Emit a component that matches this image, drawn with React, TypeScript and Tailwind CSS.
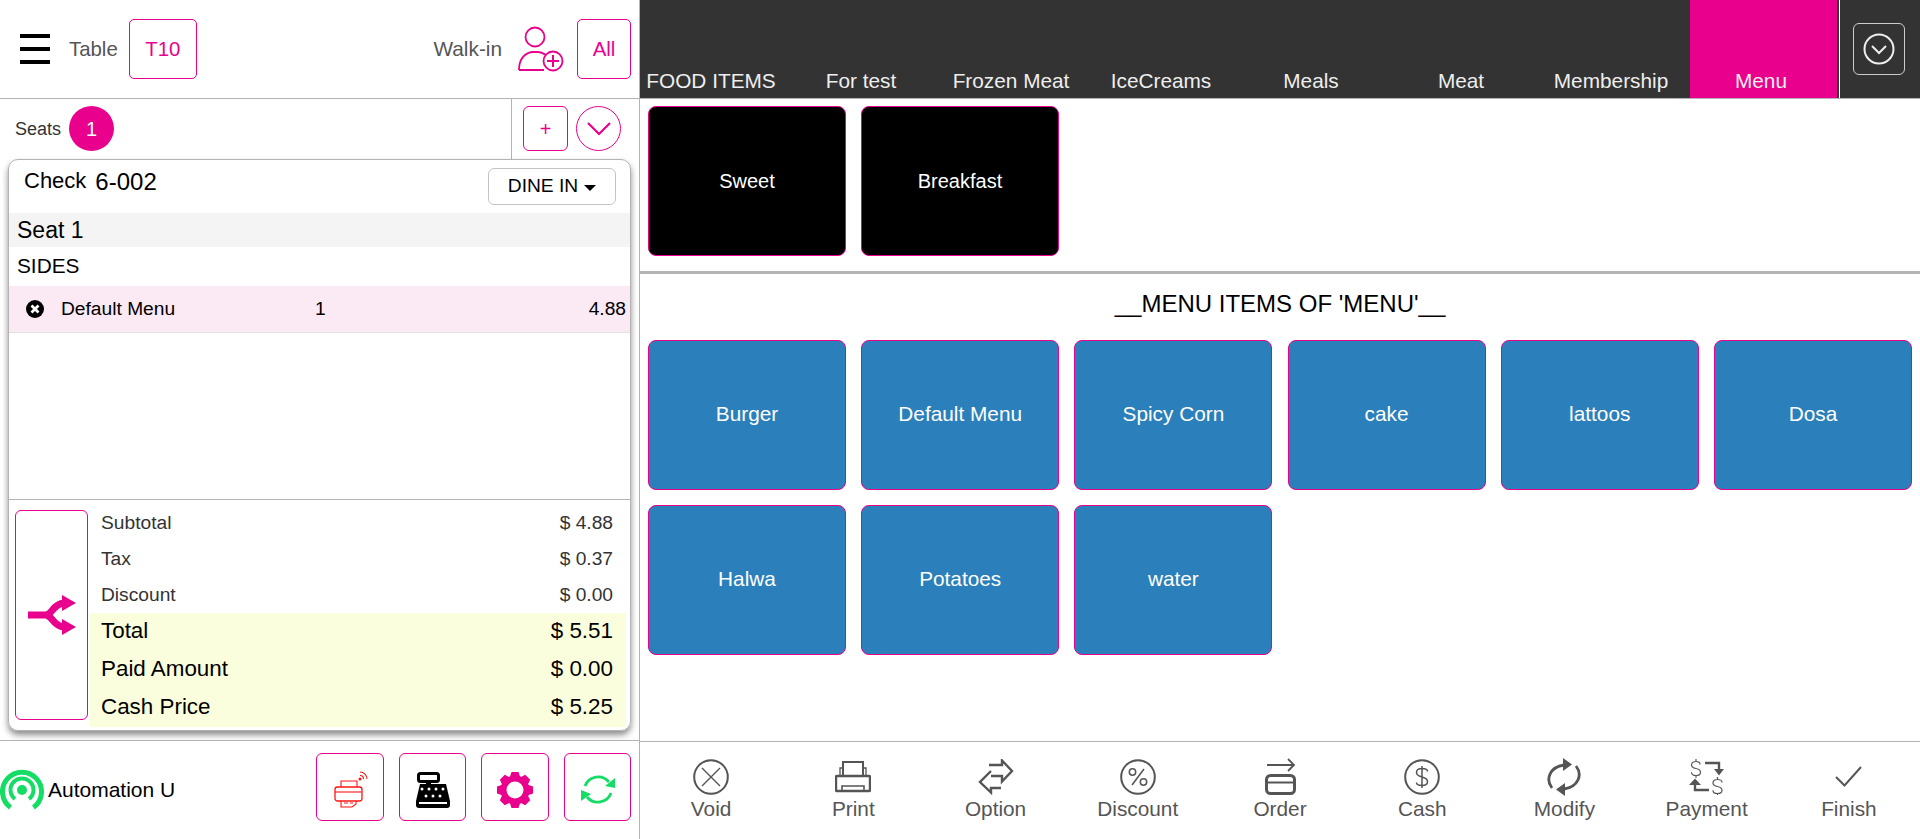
const tabs = ["FOOD ITEMS", "For test", "Frozen Meat", "IceCreams", "Meals", "Meat", "Membership", "Menu"];
const menuItems = ["Burger", "Default Menu", "Spicy Corn", "cake", "lattoos", "Dosa", "Halwa", "Potatoes", "water"];

const ACCENT = "#e9008c";

const VoidIcon = () => (
  <svg width="36" height="36" viewBox="0 0 36 36" fill="none" stroke="#555" strokeWidth="2">
    <circle cx="18" cy="18" r="16.8" />
    <path d="M9 9l18 18M27 9L9 27" strokeWidth="1.4" />
  </svg>
);

const PrintIcon = () => (
  <svg width="36" height="36" viewBox="0 0 36 36" fill="none" stroke="#555" strokeWidth="2">
    <path d="M8 17V3h20v14" />
    <path d="M8 9H5v8M28 9h3v8" strokeWidth="1.3" />
    <rect x="1" y="17" width="34" height="15" rx="1" strokeWidth="2.4" />
    <path d="M7 32v-5h22v5" strokeWidth="1.6" />
  </svg>
);

const OptionIcon = () => (
  <svg width="36" height="36" viewBox="0 0 36 36" fill="none" stroke="#555" strokeWidth="2.4">
    <path d="M11 6h13V1.500L34 12 24 22.500V17H13" />
    <path d="M23 29H13v4.500L2 23l11-11" />
  </svg>
);

const DiscountIcon = () => (
  <svg width="36" height="36" viewBox="0 0 36 36" fill="none" stroke="#555" strokeWidth="2">
    <circle cx="18" cy="18" r="16.8" />
    <path d="M24 10L12 26" strokeWidth="1.5" />
    <circle cx="12.5" cy="13" r="3.2" strokeWidth="1.5" />
    <circle cx="23.5" cy="23" r="3.2" strokeWidth="1.5" />
  </svg>
);

const OrderIcon = () => (
  <svg width="36" height="38" viewBox="0 0 36 38" fill="none" stroke="#555">
    <path d="M5 7h27M26 1l6 6-6 6" strokeWidth="1.800" />
    <rect x="4.500" y="17.500" width="28" height="18" rx="4" strokeWidth="3" />
    <path d="M4 24.500h29" strokeWidth="2" />
  </svg>
);

const CashIcon = () => (
  <svg width="36" height="36" viewBox="0 0 36 36" fill="none" stroke="#555" strokeWidth="2">
    <circle cx="18" cy="18" r="16.8" />
    <path d="M23.5 12.5c0-2-2.500-3-5.500-3s-5.500 1.200-5.500 4 2.500 3.700 5.500 4.500 5.500 1.700 5.500 4.500-2.500 4-5.500 4-5.500-1-5.500-3M18 7v22" strokeWidth="1.5" />
  </svg>
);

const ModifyIcon = () => (
  <svg width="36" height="40" viewBox="0 0 36 40" fill="none" stroke="#555" strokeWidth="2.8">
    <path d="M6 31C-1 22 4 10 18 8" />
    <path d="M30 9c7 9 2 21-12 23" />
    <path d="M17 1l9 6.500-9 6.500z" fill="#555" strokeWidth="0" />
    <path d="M19 26l-9 6.500 9 6.500z" fill="#555" strokeWidth="0" />
  </svg>
);

const PaymentIcon = () => (
  <svg width="38" height="36" viewBox="0 0 38 36" fill="none" stroke="#555">
    <path d="M12 5.500C12 3 10 2.500 8 2.500S3.500 3.500 3.500 6s2 3 4.500 3.500 4.500 1.300 4.500 3.700-2 3.300-4.500 3.300-4.500-1-4.500-3.300M8 0v2.500M8 16.500V19" strokeWidth="1.200" />
    <path d="M17 4h14v7" strokeWidth="2.400" />
    <path d="M26 10h10l-5 6.500z" fill="#555" strokeWidth="0" />
    <path d="M34 23.500c0-2.500-2-3-4.500-3s-4.500 1-4.500 3.500 2 3 4.500 3.500 4.500 1.300 4.500 3.700-2 3.300-4.500 3.300-4.500-1-4.500-3.300M29.500 18v2.500M29.500 34.500V37" strokeWidth="1.200" />
    <path d="M21 31H7v-6" strokeWidth="2.400" />
    <path d="M1 26h12l-6-6.500z" fill="#555" strokeWidth="0" />
  </svg>
);

const FinishIcon = () => (
  <svg width="28" height="24" viewBox="0 0 28 24" fill="none" stroke="#555" strokeWidth="2">
    <path d="M1 12l8.500 8.500L26 2" />
  </svg>
);

const actions = [
  { label: "Void", icon: <VoidIcon /> },
  { label: "Print", icon: <PrintIcon /> },
  { label: "Option", icon: <OptionIcon /> },
  { label: "Discount", icon: <DiscountIcon /> },
  { label: "Order", icon: <OrderIcon /> },
  { label: "Cash", icon: <CashIcon /> },
  { label: "Modify", icon: <ModifyIcon /> },
  { label: "Payment", icon: <PaymentIcon /> },
  { label: "Finish", icon: <FinishIcon /> },
];

const GearIcon = () => (
  <svg width="36" height="36" viewBox="0 0 36 36">
    <circle cx="18" cy="18" r="11.500" fill="none" stroke={ACCENT} strokeWidth="6" />
    {[0, 45, 90, 135, 180, 225, 270, 315].map((deg) => (
      <path key={deg} d="M12.500 6l2-6h7l2 6z" fill={ACCENT} transform={`rotate(${deg} 18 18)`} />
    ))}
  </svg>
);

const PrinterWifiIcon = () => (
  <svg width="34" height="38" viewBox="0 0 34 38" fill="none" stroke="#ff1414" strokeWidth="1.100">
    <path d="M7 16v-6h16v6" />
    <rect x="1" y="16" width="27" height="14" rx="2.500" strokeWidth="1.300" />
    <path d="M1 21h27" />
    <path d="M7 30v6h11l4-3v-3" />
    <path d="M10 32h4M16 32h3" />
    <circle cx="26" cy="8" r="1.500" fill="#ff1414" strokeWidth="0" />
    <path d="M26 4.500a3.500 3.500 0 0 1 3.500 3.500M26 1a7 7 0 0 1 7 7" />
  </svg>
);

const RegisterIcon = () => (
  <svg width="36" height="36" viewBox="0 0 36 36">
    <rect x="3.500" y="1.500" width="20" height="8" rx="2" fill="none" stroke="#000" strokeWidth="3" />
    <path d="M11 9h5v4h-5z" fill="#000" />
    <path d="M5 12h26l4 17v4a3 3 0 0 1-3 3H4a3 3 0 0 1-3-3v-4z" fill="#000" />
    <rect x="4" y="30" width="28" height="2" fill="#fff" />
    {[7, 14, 21, 28].map((x) => (
      <circle key={x} cx={x} cy="17" r="1.500" fill="#fff" />
    ))}
    {[11, 18, 25].map((x) => (
      <circle key={x} cx={x} cy="24" r="1.500" fill="#fff" />
    ))}
  </svg>
);

const SyncIcon = () => (
  <svg width="36" height="33" viewBox="0 0 36 33" fill="none" stroke="#14dc64" strokeWidth="2.800">
    <path d="M5 13A14 14 0 0 1 29 9" />
    <path d="M31 20A14 14 0 0 1 7 24" />
    <path d="M35 5v10l-10-2z" fill="#14dc64" strokeWidth="0" />
    <path d="M1 17v11l10-7z" fill="#14dc64" strokeWidth="0" />
  </svg>
);

const WifiIcon = () => (
  <svg width="45" height="42" viewBox="0 0 45 42" fill="none" stroke="#14dc64" className="shrink-0">
    <path d="M10.500 39.500a19.500 19.500 0 1 1 23 0" strokeWidth="5" />
    <path d="M15 31a11.500 11.500 0 1 1 14 0" strokeWidth="4" />
    <circle cx="22" cy="22" r="5" fill="#14dc64" strokeWidth="0" />
  </svg>
);

export default function App() {
  return (
    <div className="flex h-[839px] w-[1920px] overflow-hidden bg-white font-['Liberation_Sans',Arial,sans-serif]">
      {/* left panel: check */}
      <div className="flex w-[640px] shrink-0 flex-col border-r border-[#b3b3b3]">
        <div className="flex h-[99px] shrink-0 items-center border-b border-[#b3b3b3] pl-[20px] pr-[8px]">
          <div className="flex h-[30px] w-[30px] flex-col justify-between">
            <span className="h-[4px] bg-black" />
            <span className="h-[4px] bg-black" />
            <span className="h-[4px] bg-black" />
          </div>
          <span className="ml-[19px] text-[20.4px] text-[#555]">Table</span>
          <button className="ml-[11px] h-[60px] w-[68px] rounded-[5px] border border-[#e9008c] text-[20.4px] text-[#e9008c]">T10</button>
          <span className="ml-auto text-[20.8px] text-[#555]">Walk-in</span>
          <svg width="46" height="46" viewBox="0 0 46 46" fill="none" stroke="#e9008c" strokeWidth="1.800" className="ml-[16px] mr-[13px]">
            <ellipse cx="17" cy="11" rx="9.500" ry="9.500" />
            <path d="M1 44c0-10 5-17 13-18h6c3 0 5 1 8 3M1 44h25" />
            <circle cx="35" cy="35" r="9.500" />
            <path d="M35 29v12M29 35h12" strokeWidth="2" />
          </svg>
          <button className="h-[60px] w-[54px] rounded-[5px] border border-[#e9008c] text-[20.4px] text-[#e9008c]">All</button>
        </div>

        <div className="flex h-[60px] shrink-0">
          <div className="flex flex-1 items-start pl-[15px] pt-[7px]">
            <span className="mt-[11px] text-[18px] leading-[24px] text-[#333]">Seats</span>
            <span className="ml-[8px] flex h-[45px] w-[45px] items-center justify-center rounded-full bg-[#e9008c] text-[20px] text-white">1</span>
          </div>
          <div className="flex w-[128px] items-start gap-[8px] border-l border-[#b3b3b3] pl-[11px] pt-[7px]">
            <button className="flex h-[45px] w-[45px] items-center justify-center rounded-[6px] border border-[#e9008c] text-[20px] text-[#e9008c]">+</button>
            <button className="flex h-[45px] w-[45px] items-center justify-center rounded-full border border-[#e9008c]">
              <svg width="24" height="14" viewBox="0 0 24 14" fill="none" stroke="#e9008c" strokeWidth="2.200">
                <path d="M1 1l11 11L23 1" />
              </svg>
            </button>
          </div>
        </div>

        <div className="ml-[8px] flex h-[572px] w-[623px] shrink-0 flex-col rounded-[10px] border border-[#b3b3b3] shadow-[0_4px_6px_rgba(0,0,0,0.45)]">
          <div className="flex h-[53px] shrink-0 items-start justify-between pl-[15px] pr-[14px]">
            <div className="mt-[6px] leading-[28px] text-black">
              <span className="text-[22px]">Check</span>
              <span className="ml-[9px] relative top-[2px] text-[24px]">6-002</span>
            </div>
            <button className="mt-[8px] flex h-[37px] w-[128px] items-center justify-center rounded-[6px] border border-[#c4c4c4] text-[19.2px] text-black">
              DINE IN
              <span className="ml-[6px] mt-[2px] h-0 w-0 border-x-[6px] border-t-[6px] border-x-transparent border-t-black" />
            </button>
          </div>
          <div className="flex h-[34px] shrink-0 items-center bg-[#f4f4f4] pl-[8px] text-[23px] text-black">Seat 1</div>
          <div className="flex h-[39px] shrink-0 items-center pl-[8px] pb-[2px] text-[20.8px] text-black">SIDES</div>
          <div className="flex h-[47px] shrink-0 items-center border-b border-[#e2e2e2] bg-[#fbe9f4] pl-[17px] pr-[4px] text-[19.2px] text-black">
            <svg width="18" height="18" viewBox="0 0 18 18">
              <circle cx="9" cy="9" r="9" fill="#000" />
              <path d="M5.500 5.500l7 7M12.500 5.500l-7 7" stroke="#fff" strokeWidth="2.800" />
            </svg>
            <span className="ml-[17px] w-[254px]">Default Menu</span>
            <span>1</span>
            <span className="ml-auto">4.88</span>
          </div>
          <div className="flex-1 border-b border-[#b3b3b3]" />
          <div className="flex h-[230px] shrink-0 pl-[6px] pr-[4px]">
            <button className="mt-[10px] flex h-[210px] w-[73px] shrink-0 items-center justify-center rounded-[6px] border border-[#e9008c]">
              <svg width="48" height="40" viewBox="0 0 48 40">
                <path d="M0 20h17C25 20 24 9 36 8M17 20c8 0 7 11 19 12" fill="none" stroke="#e9008c" strokeWidth="7" />
                <path d="M34 0l14 8-14 8zM34 24l14 8-14 8z" fill="#e9008c" />
              </svg>
            </button>
            <div className="ml-[2px] flex flex-1 flex-col pt-[5px]">
              {[["Subtotal", "$ 4.88"], ["Tax", "$ 0.37"], ["Discount", "$ 0.00"]].map(([name, value]) => (
                <div key={name} className="flex h-[36px] items-center justify-between pl-[11px] pr-[13px] text-[19.2px] text-[#333]">
                  <span>{name}</span>
                  <span>{value}</span>
                </div>
              ))}
              <div className="bg-[#fbfedc]">
                {[["Total", "$ 5.51"], ["Paid Amount", "$ 0.00"], ["Cash Price", "$ 5.25"]].map(([name, value]) => (
                  <div key={name} className="flex h-[38px] items-center justify-between pb-[2px] pl-[11px] pr-[13px] text-[22.4px] text-black">
                    <span>{name}</span>
                    <span>{value}</span>
                  </div>
                ))}
              </div>
            </div>
          </div>
        </div>

        <div className="mt-[9px] flex flex-1 items-start border-t border-[#b3b3b3]">
          <div className="mt-[27px] flex items-center">
            <WifiIcon />
            <span className="ml-[3px] mt-[1px] text-[21px] text-black">Automation U</span>
          </div>
          <div className="ml-auto mr-[8px] mt-[12px] flex gap-[15px]">
            <button className="flex h-[68px] w-[68px] items-center justify-center rounded-[6px] border border-[#e9008c] pl-[2px] pt-[5px]"><PrinterWifiIcon /></button>
            <button className="flex h-[68px] w-[67px] items-center justify-center rounded-[6px] border border-[#e9008c] pt-[5px]"><RegisterIcon /></button>
            <button className="flex h-[68px] w-[68px] items-center justify-center rounded-[6px] border border-[#e9008c] pt-[5px]"><GearIcon /></button>
            <button className="flex h-[68px] w-[67px] items-center justify-center rounded-[6px] border border-[#e9008c] pt-[5px]"><SyncIcon /></button>
          </div>
        </div>
      </div>

      {/* right panel: menu */}
      <div className="flex min-w-0 flex-1 flex-col">
        <div className="flex h-[99px] shrink-0 border-b border-[#b3b3b3] bg-[#333]">
          {tabs.map((tab) => (
            <div
              key={tab}
              className={`flex h-full w-[150px] shrink-0 items-end whitespace-nowrap pb-[2px] text-[20.8px] text-[#eee] ${tab === "Menu" ? "border-r border-white" : ""}`}
            >
              {tab === "Menu" ? (
                <span className="-mb-[2px] flex h-[98px] w-[147px] items-end justify-center bg-[#e9008c] pb-[2px] pr-[5px]">{tab}</span>
              ) : (
                <span className="w-[142px] text-center">{tab}</span>
              )}
            </div>
          ))}
          <button className="ml-[13px] mt-[23px] flex h-[52px] w-[52px] items-center justify-center rounded-[6px] border border-[#ccc]">
            <svg width="32" height="32" viewBox="0 0 32 32" fill="none" stroke="#eee" strokeWidth="2">
              <circle cx="16" cy="16" r="14.500" />
              <path d="M9 13l7 7 7-7" />
            </svg>
          </button>
        </div>

        <div className="flex h-[175px] shrink-0 gap-[15px] border-b-[3px] border-[#b3b3b3] pl-[8px] pt-[7px]">
          {["Sweet", "Breakfast"].map((name) => (
            <button key={name} className="h-[150px] w-[198px] rounded-[8px] border border-[#e9008c] bg-black text-[20px] text-white">{name}</button>
          ))}
        </div>

        <div className="flex h-[66px] shrink-0 items-center justify-center pb-[6px] text-[24px] text-black">__MENU ITEMS OF 'MENU'__</div>

        <div className="grid flex-1 grid-cols-[repeat(6,198px)] content-start gap-x-[15.2px] gap-y-[15px] pl-[8px]">
          {menuItems.map((name) => (
            <button key={name} className="h-[150px] rounded-[8px] border border-[#e9008c] bg-[#2b7fba] pb-[2px] text-[20.8px] text-white">{name}</button>
          ))}
        </div>

        <div className="grid h-[98px] shrink-0 grid-cols-9 border-t border-[#b3b3b3]">
          {actions.map((action) => (
            <div key={action.label} className="flex flex-col items-center pt-[16px] text-[20.8px] text-[#555]">
              <div className="flex h-[38px] items-center justify-center">{action.icon}</div>
              <span className="mt-[1px] leading-[24px]">{action.label}</span>
            </div>
          ))}
        </div>
      </div>
    </div>
  );
}
